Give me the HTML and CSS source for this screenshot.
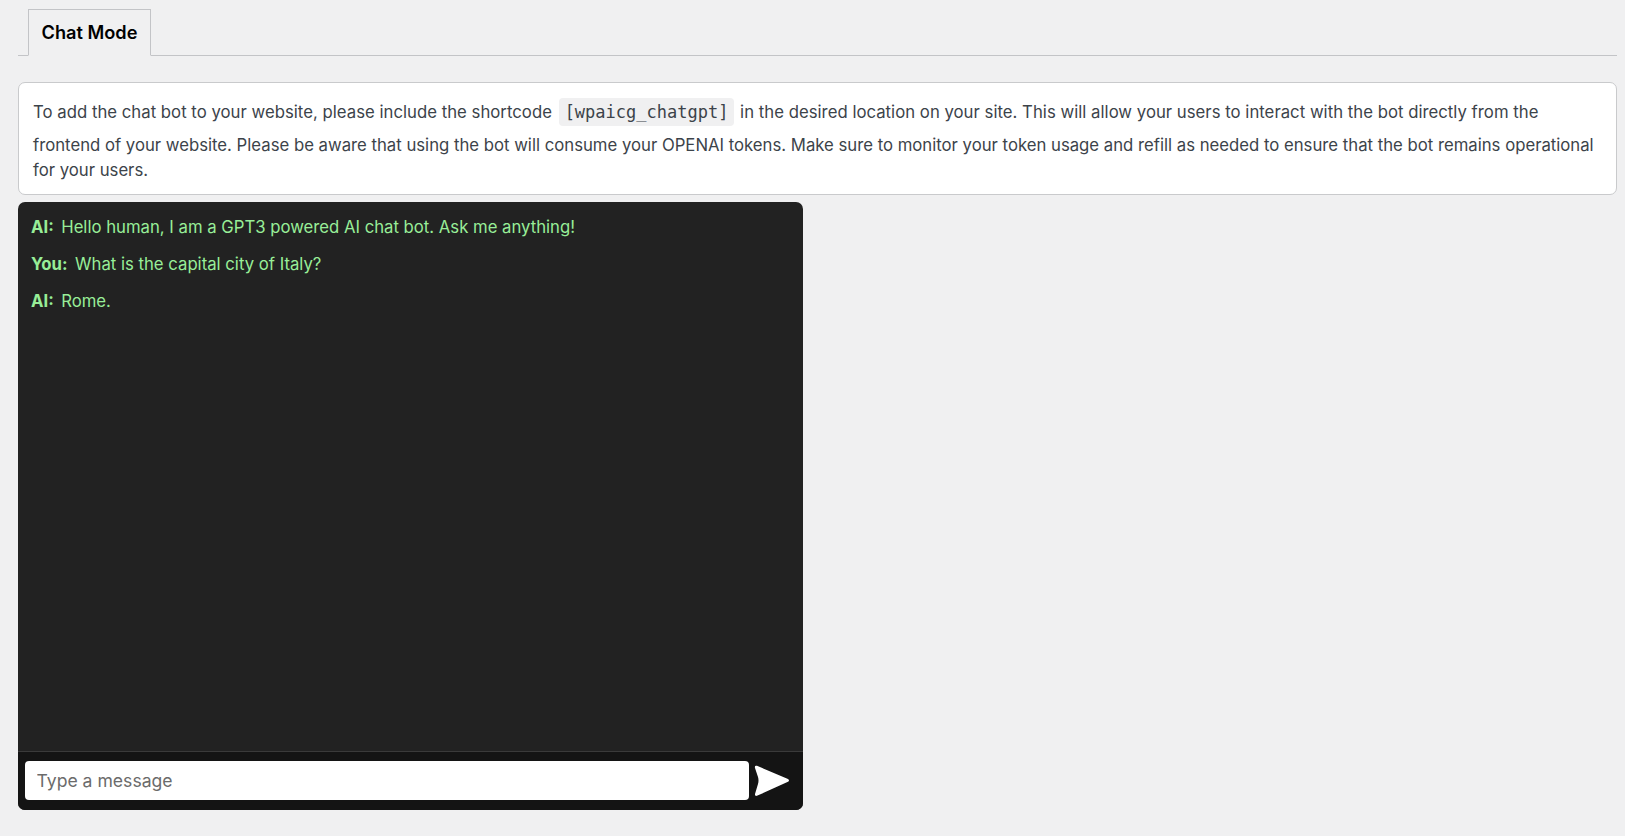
FILE: index.html
```html
<!DOCTYPE html>
<html lang="en">
<head>
<meta charset="utf-8">
<title>Chat Mode</title>
<link rel="stylesheet" href="styles.css">
</head>
<body>
<div class="wrap">
  <nav class="tabs"><a class="tab">Chat Mode</a></nav>
  <div class="notice">
    <p class="notice-first">To add the chat bot to your website, please include the shortcode <code class="code">[wpaicg_chatgpt]</code> in the desired location on your site. This will allow your users to interact with the bot directly from the</p>
    <p class="notice-rest">frontend of your website. Please be aware that using the bot will consume your OPENAI tokens. Make sure to monitor your token usage and refill as needed to ensure that the bot remains operational<br>for your users.</p>
  </div>
  <section class="chat">
    <div class="messages">
      <p class="msg"><strong class="who">AI:</strong><span>Hello human, I am a GPT3 powered AI chat bot. Ask me anything!</span></p>
      <p class="msg"><strong class="who">You:</strong><span>What is the capital city of Italy?</span></p>
      <p class="msg"><strong class="who">AI:</strong><span>Rome.</span></p>
    </div>
    <div class="composer">
      <input class="input" type="text" placeholder="Type a message">
      <button class="send" type="button" aria-label="Send">
        <svg viewBox="0 0 36 32" width="36" height="32"><path d="M1 3 Q.3 0 3 .8 L34 14 Q36 15.5 34 16.8 L3.5 30.6 Q.6 31.6 1 29 L4 19 Q5 15.5 4 12 Z" fill="#fff"/></svg>
      </button>
    </div>
  </section>
</div>
</body>
</html>
```
FILE: styles.css
```css
* { box-sizing: border-box; }
html, body { margin: 0; padding: 0; }
body {
  background: #f0f0f1;
  font-family: Inter, "Liberation Sans", sans-serif;
  color: #3c434a;
  height: 836px;
  overflow: hidden;
}
.wrap { padding: 9px 8px 0 18px; }
.tabs {
  height: 47px;
  border-bottom: 1px solid #c3c4c7;
  padding-left: 10px;
  display: flex;
}
.tab {
  height: 47px;
  width: 123px;
  border: 1px solid #c3c4c7;
  border-bottom: 1px solid #f0f0f1;
  background: #f0f0f1;
  color: #000;
  font-weight: 600;
  font-size: 18.2px;
  line-height: 45px;
  text-align: center;
}
.notice {
  margin-top: 26px;
  height: 113px;
  background: #fff;
  border: 1px solid #c9cacc;
  border-radius: 7px;
  padding: 14px 13px 0 14px;
  font-size: 16.72px;
  white-space: nowrap;
}
.notice p { margin: 0; }
.notice-first { line-height: 30px; letter-spacing: .025px; }
.notice-rest { line-height: 24.5px; letter-spacing: .005px; margin-top: 6px !important; }
.code {
  font-family: "DejaVu Sans Mono", monospace;
  font-size: 17px;
  letter-spacing: 0;
  background: #f0f0f1;
  border-radius: 4px;
  padding: 4px 6px;
  margin: 0 1px 0 2px;
}
.chat {
  margin-top: 7px;
  width: 785px;
  height: 608px;
  background: #222;
  border-radius: 7px;
  display: flex;
  flex-direction: column;
  overflow: hidden;
}
.messages {
  flex: 1;
  padding: 13px 13px 0;
  color: #98ee98;
  font-size: 16.7px;
}
.msg { margin: 0 0 12px; line-height: 25px; display: flex; gap: 7.5px; }
.who { font-weight: 700; }
.composer {
  height: 59px;
  background: #141414;
  border-top: 1px solid #3a3a3a;
  display: flex;
  align-items: center;
  padding: 0 10px 1px 7px;
  gap: 5px;
}
.input {
  width: 724px;
  height: 39px;
  border: 0;
  border-radius: 4px;
  background: #fff;
  padding: 0 11.5px;
  font-family: Inter, "Liberation Sans", sans-serif;
  font-size: 17.6px;
}
.input::placeholder { color: #6b6b6b; opacity: 1; }
.send { background: none; border: 0; padding: 0; width: 36px; height: 32px; display: block; }
.send svg { display: block; }
```
